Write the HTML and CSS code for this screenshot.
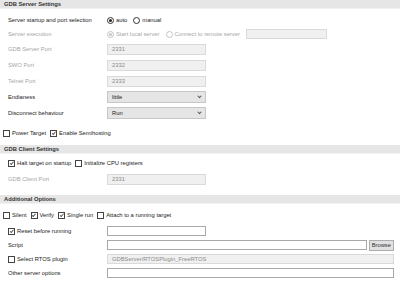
FILE: index.html
```html
<!DOCTYPE html>
<html lang="en">
<head>
	<meta charset="UTF-8">
	<title>Debugger settings</title>
	<link rel="stylesheet" href="styles.css">
</head>
<body>
	<div class="head">GDB Server Settings</div>
	<div class="pane">
		<div class="row r14 first">
			<span class="label">Server startup and port selection</span>
			<div class="ctl"><span class="radio on"></span><span class="opt">auto</span><span class="radio"></span><span class="opt">manual</span></div>
		</div>
		<div class="row r14 off">
			<span class="label">Server execution</span>
			<div class="ctl">
				<span class="radio on dis"></span><span class="opt">Start local server</span>
				<span class="radio dis"></span><span class="opt">Connect to remote server</span>
				<span class="field dis remote"></span>
			</div>
		</div>
		<div class="row r16 off">
			<span class="label">GDB Server Port</span>
			<span class="field dis short">2331</span>
		</div>
		<div class="row r16 off">
			<span class="label">SWO Port</span>
			<span class="field dis short">2332</span>
		</div>
		<div class="row r16 off">
			<span class="label">Telnet Port</span>
			<span class="field dis short">2333</span>
		</div>
		<div class="row r16">
			<span class="label">Endianess</span>
			<span class="select">little</span>
		</div>
		<div class="row r16">
			<span class="label">Disconnect behaviour</span>
			<span class="select">Run</span>
		</div>
		<div class="checks outer gap-top">
			<span class="check"></span><span class="opt">Power Target</span>
			<span class="check on"></span><span class="opt">Enable Semihosting</span>
		</div>
	</div>

	<div class="head">GDB Client Settings</div>
	<div class="pane client">
		<div class="checks r16 first-small">
			<span class="check on"></span><span class="opt">Halt target on startup</span>
			<span class="check"></span><span class="opt">Initialize CPU registers</span>
		</div>
		<div class="row r16 off">
			<span class="label">GDB Client Port</span>
			<span class="field dis short">2331</span>
		</div>
	</div>

	<div class="head">Additional Options</div>
	<div class="pane">
		<div class="checks outer r14 first">
			<span class="check"></span><span class="opt">Silent</span>
			<span class="check on"></span><span class="opt">Verify</span>
			<span class="check on"></span><span class="opt">Single run</span>
			<span class="check"></span><span class="opt">Attach to a running target</span>
		</div>
		<div class="row r14 gap-small">
			<span class="label"><span class="check on"></span>Reset before running</span>
			<span class="field short"></span>
		</div>
		<div class="row r14">
			<span class="label">Script</span>
			<div class="ctl wide"><span class="field grow"></span><span class="button">Browse</span></div>
		</div>
		<div class="row r14">
			<span class="label"><span class="check"></span>Select RTOS plugin</span>
			<span class="field dis long">GDBServer/RTOSPlugin_FreeRTOS</span>
		</div>
		<div class="row r14">
			<span class="label">Other server options</span>
			<span class="field long"></span>
		</div>
	</div>
</body>
</html>
```

FILE: styles.css
```css
*, *:before, *:after {
	box-sizing: border-box;
}
html {
	font-family: 'Liberation Sans', Arial, sans-serif;
	font-size: 5.8px;
	color: #1a1a1a;
}
body {
	margin: 0;
	background: white;
	width: 400px;
}
.head {
	height: 9px;
	line-height: 9px;
	background: #e6e6e6;
	border-bottom: 1px solid #f2f2f2;
	padding-left: 4px;
	font-weight: bold;
	color: #333;
}
.pane {
	padding-left: 8px;
	padding-bottom: 5px;
}
.pane.client {
	padding-bottom: 8px;
}
.row {
	display: grid;
	grid-template-columns: 99px 1fr;
	align-items: center;
}
.r14 { height: 14px; }
.r16 { height: 16px; }
.first { margin-top: 4px; }
.first-small { margin-top: 1px; }
.gap-top { margin-top: 5px; }
.gap-small { margin-top: 2px; }
.off .label {
	color: #a6a6a6;
}
.label {
	display: flex;
	align-items: center;
	white-space: nowrap;
}
.ctl {
	display: flex;
	align-items: center;
	white-space: nowrap;
}
.off .opt {
	color: #a6a6a6;
}
.opt {
	margin-left: 2px;
	margin-right: 6px;
}
.radio {
	width: 7px;
	height: 7px;
	border: 1px solid #333;
	border-radius: 50%;
	display: inline-block;
	position: relative;
	flex: none;
}
.radio.on:after {
	content: '';
	position: absolute;
	left: 1px;
	top: 1px;
	width: 3px;
	height: 3px;
	border-radius: 50%;
	background: #222;
}
.radio.dis {
	border-color: #c4c4c4;
}
.radio.dis.on:after {
	background: #c4c4c4;
}
.checks {
	display: flex;
	align-items: center;
	height: 14px;
	white-space: nowrap;
}
.checks.r16 {
	height: 16px;
}
.checks.outer {
	margin-left: -5px;
}
.checks .opt {
	margin-right: 4px;
}
.check {
	width: 7px;
	height: 7px;
	border: 1px solid #444;
	display: inline-block;
	position: relative;
	flex: none;
}
.check.on:after {
	content: '';
	position: absolute;
	left: 1.5px;
	top: 0;
	width: 2px;
	height: 3.5px;
	border: solid #555;
	border-width: 0 1px 1px 0;
	transform: rotate(40deg);
}
.label .check {
	margin-right: 2px;
}
.field {
	display: flex;
	align-items: center;
	height: 10px;
	border: 1px solid #a8a8a8;
	background: white;
	padding-left: 4px;
	color: #666;
}
.field.dis {
	background: #f0f0f0;
	border-color: #dadada;
	color: #8c8c8c;
}
.field.short {
	width: 99px;
	height: 11px;
}
.row.r14 .field.short {
	height: 10px;
}
.field.remote {
	width: 81px;
	height: 10px;
}
.field.long {
	width: 287px;
}
.wide {
	width: 287px;
}
.field.grow {
	flex: 1;
}
.button {
	height: 11px;
	line-height: 9px;
	margin-left: 2px;
	padding: 0 2px;
	background: #e1e1e1;
	border: 1px solid #adadad;
	color: #333;
}
.select {
	display: flex;
	align-items: center;
	justify-content: space-between;
	width: 99px;
	height: 12px;
	padding: 0 4px;
	background: #e5e5e5;
	border: 1px solid #c6c6c6;
}
.select:after {
	content: '';
	width: 3px;
	height: 3px;
	border: solid #555;
	border-width: 0 1px 1px 0;
	transform: rotate(45deg) translate(-1px, -1px);
}
```
